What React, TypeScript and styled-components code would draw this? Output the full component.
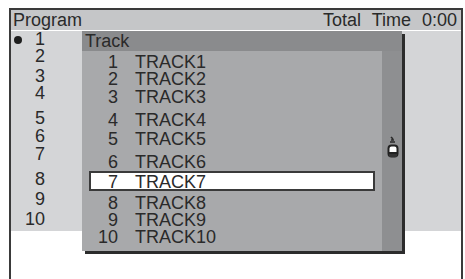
import styled, { createGlobalStyle } from 'styled-components'

const GlobalStyle = createGlobalStyle`
  html, body {
    margin: 0;
    padding: 0;
    background: #fff;
  }
  body {
    font-family: "Liberation Sans", Arial, sans-serif;
    color: #2a2a2a;
  }
`

const Frame = styled.div`
  margin: 8px 0 0 9px;
  width: 454px;
  height: 271px;
  box-sizing: border-box;
  border: 2px solid #3a3a3a;
  border-bottom: none;
  background: #fff;
`

const HeaderBar = styled.div`
  display: flex;
  justify-content: space-between;
  height: 20px;
  line-height: 20px;
  padding: 0 4px 0 2px;
  background: #c5c6c8;
  font-size: 18px;
`

const TotalTime = styled.span`
  word-spacing: 6px;
`

const Content = styled.div`
  position: relative;
  height: 200px;
  background: #d4d5d7;
`

const ProgramList = styled.ul`
  list-style: none;
  margin: 0;
  padding: 0;
  width: 71px;
  font-size: 18px;
`

const ProgramRow = styled.li<{ $gap: number }>`
  display: flex;
  align-items: center;
  height: 17px;
  line-height: 17px;
  margin-top: ${p => p.$gap}px;
  padding-left: 3px;
`

const Marker = styled.span<{ $on: boolean }>`
  width: 8px;
  height: 8px;
  border-radius: 50%;
  background: ${p => (p.$on ? '#1e1e1e' : 'transparent')};
`

const ProgramNum = styled.span`
  width: 23px;
  text-align: right;
`

const Popup = styled.div`
  position: absolute;
  left: 71px;
  top: 0;
  width: 320px;
  height: 220px;
  display: flex;
  flex-direction: column;
  box-shadow: 3px 3px 0 #2c2c2c;
  font-size: 18px;
`

const PopupTitle = styled.div`
  height: 20px;
  line-height: 20px;
  padding-left: 3px;
  background: #8a8b8d;
`

const PopupBody = styled.div`
  flex: 1;
  display: flex;
`

const TrackList = styled.ul`
  list-style: none;
  margin: 0;
  padding: 0;
  width: 300px;
  background: #a8a9ab;
`

const TrackRow = styled.li<{ $gap: number; $selected?: boolean }>`
  display: flex;
  gap: 17px;
  margin-top: ${p => p.$gap}px;
  height: ${p => (p.$selected ? 20 : 17)}px;
  line-height: ${p => (p.$selected ? 18 : 17)}px;
  box-sizing: border-box;
  ${p =>
    p.$selected
      ? `
    margin-left: 7px;
    margin-right: 7px;
    border: 2px solid #3a3a3a;
    background: #fff;
  `
      : `
    padding-left: 9px;
  `}
`

const TrackNum = styled.span`
  width: 27px;
  text-align: right;
`

const ScrollStrip = styled.div`
  width: 20px;
  background: #8e8f91;
  padding: 85px 0 0 5px;
  box-sizing: border-box;
`

const programGaps = [1, 0, 3, 0, 8, 1, 1, 8, 3, 3]
const trackGaps = [3, 0, 1, 6, 2, 6, 0, 4, 0, 0]
const selectedTrack = 7

function ScrollIcon() {
  return (
    <svg width="12" height="23" viewBox="0 0 12 23">
      <path d="M4 1 L6 3 M4 4 L7 4 M3 6 L8 6" stroke="#2a2a2a" strokeWidth="1.6" fill="none" />
      <rect x="1.5" y="9.5" width="9" height="11" rx="3" fill="#fff" stroke="#222" strokeWidth="2" />
      <path d="M2 17 L10 17" stroke="#222" strokeWidth="2" />
      <rect x="2" y="18" width="8" height="3" fill="#333" />
    </svg>
  )
}

export default function App() {
  return (
    <>
      <GlobalStyle />
      <Frame>
        <HeaderBar>
          <span>Program</span>
          <TotalTime>Total Time 0:00</TotalTime>
        </HeaderBar>
        <Content>
          <ProgramList>
            {programGaps.map((gap, i) => (
              <ProgramRow key={i} $gap={gap}>
                <Marker $on={i === 0} />
                <ProgramNum>{i + 1}</ProgramNum>
              </ProgramRow>
            ))}
          </ProgramList>
          <Popup>
            <PopupTitle>Track</PopupTitle>
            <PopupBody>
              <TrackList>
                {trackGaps.map((gap, i) => (
                  <TrackRow key={i} $gap={gap} $selected={i + 1 === selectedTrack}>
                    <TrackNum>{i + 1}</TrackNum>
                    <span>TRACK{i + 1}</span>
                  </TrackRow>
                ))}
              </TrackList>
              <ScrollStrip>
                <ScrollIcon />
              </ScrollStrip>
            </PopupBody>
          </Popup>
        </Content>
      </Frame>
    </>
  )
}
